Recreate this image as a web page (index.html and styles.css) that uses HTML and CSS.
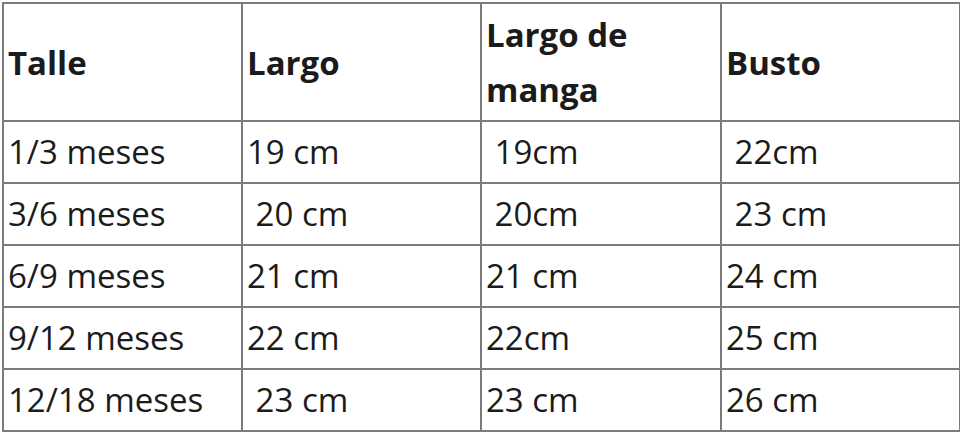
FILE: index.html
```html
<!DOCTYPE html>
<html lang="es">
<head>
<meta charset="utf-8">
<title>Tabla de talles</title>
<link rel="stylesheet" href="styles.css">
</head>
<body>
<div class="wrap">
<table class="sizes">
  <colgroup>
    <col class="c1"><col class="c2"><col class="c3"><col class="c4">
  </colgroup>
  <thead>
    <tr class="head-row">
      <th>Talle</th>
      <th>Largo</th>
      <th>Largo de manga</th>
      <th>Busto</th>
    </tr>
  </thead>
  <tbody>
    <tr><td>1/3 meses</td><td>19 cm</td><td>&nbsp;19cm</td><td>&nbsp;22cm</td></tr>
    <tr><td>3/6 meses</td><td>&nbsp;20 cm</td><td>&nbsp;20cm</td><td>&nbsp;23 cm</td></tr>
    <tr><td>6/9 meses</td><td>21 cm</td><td>21 cm</td><td>24 cm</td></tr>
    <tr><td>9/12 meses</td><td>22 cm</td><td>22cm</td><td>25 cm</td></tr>
    <tr><td>12/18 meses</td><td>&nbsp;23 cm</td><td>23 cm</td><td>26 cm</td></tr>
  </tbody>
</table>
</div>
</body>
</html>
```
FILE: styles.css
```css
html, body {
  margin: 0;
  padding: 0;
  background: #ffffff;
}
.wrap {
  padding: 2px 0 0 2px;
}
.sizes {
  width: 957px;
  border-collapse: collapse;
  table-layout: fixed;
  font-family: "Open Sans", "Noto Sans", sans-serif;
  font-size: 33px;
  color: #1b1b1b;
}
.c1 { width: 239px; }
.c2 { width: 239px; }
.c3 { width: 240px; }
.c4 { width: 239px; }
.sizes th,
.sizes td {
  border: 2px solid #7b7b7b;
  padding: 0 4px;
  text-align: left;
  vertical-align: middle;
  white-space: normal;
}
.sizes th {
  font-weight: 700;
  line-height: 55px;
  height: 116px;
}
.sizes td {
  font-weight: 400;
  line-height: 40px;
  height: 60px;
}
```
